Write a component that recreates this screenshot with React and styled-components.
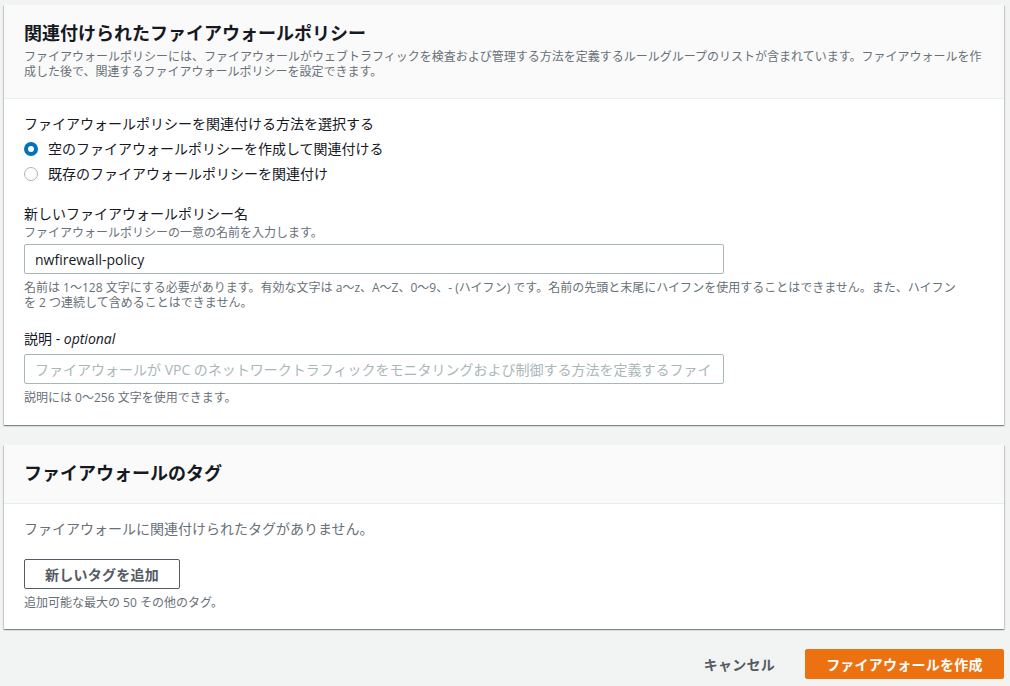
import React from 'react'
import styled, { createGlobalStyle } from 'styled-components'

const fontStack = `"Open Sans", "Noto Sans CJK JP", sans-serif`

const GlobalStyle = createGlobalStyle`
  * { box-sizing: border-box; }
  html, body { margin: 0; padding: 0; }
  body {
    background: #f2f3f3;
    color: #16191f;
    font-family: ${fontStack};
    font-size: 14px;
  }
`

function App() {
  return (
    <Page>
      <GlobalStyle />
      <Card>
        <CardHeader>
          <CardTitle>関連付けられたファイアウォールポリシー</CardTitle>
          <HeaderDesc>
            ファイアウォールポリシーには、ファイアウォールがウェブトラフィックを検査および管理する方法を定義するルールグループのリストが含まれています。ファイアウォールを作成した後で、関連するファイアウォールポリシーを設定できます。
          </HeaderDesc>
        </CardHeader>
        <PolicyBody>
          <RadioGroup>
            <Label>ファイアウォールポリシーを関連付ける方法を選択する</Label>
            <RadioRow>
              <Radio $checked />
              空のファイアウォールポリシーを作成して関連付ける
            </RadioRow>
            <RadioRow>
              <Radio />
              既存のファイアウォールポリシーを関連付け
            </RadioRow>
          </RadioGroup>

          <Field>
            <Label>新しいファイアウォールポリシー名</Label>
            <Help>ファイアウォールポリシーの一意の名前を入力します。</Help>
            <Input readOnly value="nwfirewall-policy" />
            <Hint>
              名前は 1～128 文字にする必要があります。有効な文字は a～z、A～Z、0～9、- (ハイフン) です。名前の先頭と末尾にハイフンを使用することはできません。また、ハイフンを 2 つ連続して含めることはできません。
            </Hint>
          </Field>

          <Field>
            <Label>
              説明 - <em>optional</em>
            </Label>
            <Input
              readOnly
              $gap
              placeholder="ファイアウォールが VPC のネットワークトラフィックをモニタリングおよび制御する方法を定義するファイアウォールポリシーの説明"
            />
            <Hint>説明には 0～256 文字を使用できます。</Hint>
          </Field>
        </PolicyBody>
      </Card>

      <Card>
        <CardHeader $tall>
          <CardTitle>ファイアウォールのタグ</CardTitle>
        </CardHeader>
        <TagBody>
          <Empty>ファイアウォールに関連付けられたタグがありません。</Empty>
          <OutlineButton>新しいタグを追加</OutlineButton>
          <Hint>追加可能な最大の 50 その他のタグ。</Hint>
        </TagBody>
      </Card>

      <Footer>
        <LinkButton>キャンセル</LinkButton>
        <PrimaryButton>ファイアウォールを作成</PrimaryButton>
      </Footer>
    </Page>
  )
}

export default App

const Page = styled.div`
  display: flex;
  flex-direction: column;
  gap: 20px;
  width: 1010px;
  height: 686px;
  overflow: hidden;
  padding: 5px 6px 0 4px;
`
const Card = styled.section`
  background: #fff;
  box-shadow: 0 1px 1px 0 rgba(0, 28, 36, 0.3), 1px 1px 1px 0 rgba(0, 28, 36, 0.15), -1px 1px 1px 0 rgba(0, 28, 36, 0.15);
`
const CardHeader = styled.div`
  background: #fafafa;
  border-bottom: 1px solid #eaeded;
  height: ${(p) => (p.$tall ? '59px' : '94px')};
  padding: 16px 20px 0;
`
const CardTitle = styled.h2`
  margin: 0;
  font-size: 18px;
  line-height: 24px;
  font-weight: 700;
`
const HeaderDesc = styled.p`
  margin: 4px 0 0;
  font-size: 12px;
  line-height: 15px;
  color: #687078;
`
const PolicyBody = styled.div`
  display: flex;
  flex-direction: column;
  gap: 18px;
  height: 326px;
  padding: 15px 20px 0;
`
const RadioGroup = styled.div`
  display: flex;
  flex-direction: column;
`
const Label = styled.div`
  font-size: 14px;
  line-height: 20px;
  em { font-style: italic; }
`
const RadioRow = styled.label`
  display: flex;
  align-items: center;
  gap: 10px;
  height: 25px;
  padding-bottom: 2px;
  font-size: 14px;
  color: #16191f;
  &:first-of-type { margin-top: 2px; }
`
const Radio = styled.span`
  width: 14px;
  height: 14px;
  margin-top: 2px;
  border-radius: 50%;
  background: #fff;
  border: ${(p) => (p.$checked ? '4px solid #0073bb' : '1px solid #aab7b8')};
`
const Field = styled.div`
  display: flex;
  flex-direction: column;
  & + & { margin-top: 1px; }
`
const Help = styled.div`
  font-size: 12px;
  line-height: 15px;
  color: #687078;
  margin: 1px 0 4px;
`
const Input = styled.input`
  display: block;
  width: 700px;
  height: 30px;
  margin-top: ${(p) => (p.$gap ? '5px' : '0')};
  padding: 0 10px;
  border: 1px solid #aab7b8;
  border-radius: 2px;
  background: #fff;
  color: #16191f;
  font: 14px ${fontStack};
  outline: none;
  &::placeholder {
    color: #aab7b8;
    opacity: 1;
  }
`
const Hint = styled.div`
  width: 940px;
  margin-top: 6px;
  font-size: 12px;
  line-height: 15px;
  color: #687078;
`
const TagBody = styled.div`
  height: 125px;
  padding: 15px 20px 0;
`
const Empty = styled.p`
  margin: 0 0 20px;
  font-size: 14px;
  line-height: 20px;
  color: #687078;
`
const OutlineButton = styled.button`
  display: block;
  width: 156px;
  height: 30px;
  padding: 0;
  background: #fff;
  border: 1px solid #545b64;
  border-radius: 2px;
  color: #545b64;
  font: 700 14px ${fontStack};
  letter-spacing: 0.25px;
`
const Footer = styled.div`
  display: flex;
  justify-content: flex-end;
  align-items: center;
  gap: 30px;
`
const LinkButton = styled.span`
  color: #545b64;
  font-size: 14px;
  font-weight: 700;
  letter-spacing: 0.25px;
`
const PrimaryButton = styled.button`
  width: 199px;
  height: 30px;
  padding: 0;
  background: #ec7211;
  border: 1px solid #ec7211;
  border-radius: 2px;
  color: #fff;
  font: 700 14px ${fontStack};
  letter-spacing: 0.25px;
`
